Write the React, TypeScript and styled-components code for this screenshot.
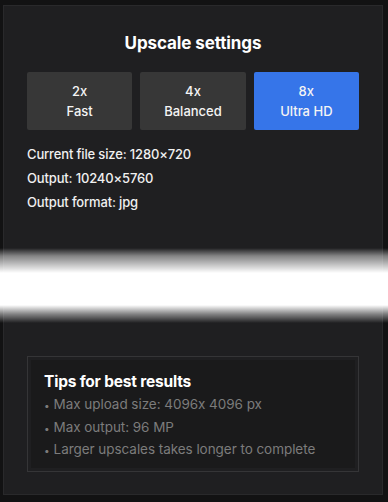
import React from "react";
import styled, { createGlobalStyle } from "styled-components";

const GlobalStyle = createGlobalStyle`
  html, body {
    margin: 0;
    padding: 0;
    background: #121213;
  }
  body {
    font-family: Inter, "Noto Sans", sans-serif;
    color: #f2f2f2;
  }
`;

const options = [
  { scale: "2x", label: "Fast", active: false },
  { scale: "4x", label: "Balanced", active: false },
  { scale: "8x", label: "Ultra HD", active: true },
];

const info = [
  "Current file size: 1280×720",
  "Output: 10240×5760",
  "Output format: jpg",
];

const tips = [
  "Max upload size: 4096x 4096 px",
  "Max output: 96 MP",
  "Larger upscales takes longer to complete",
];

const App: React.FC = () => {
  return (
    <Page>
      <GlobalStyle />
      <Panel>
        <Title>Upscale settings</Title>
        <Options>
          {options.map((item, index) => (
            <Option key={index} active={item.active}>
              <span>{item.scale}</span>
              <span>{item.label}</span>
            </Option>
          ))}
        </Options>
        <Info>
          {info.map((line, index) => (
            <p key={index}>{line}</p>
          ))}
        </Info>
        <Tips>
          <TipsInner>
            <h3>Tips for best results</h3>
            <ul>
              {tips.map((tip, index) => (
                <li key={index}>{tip}</li>
              ))}
            </ul>
          </TipsInner>
        </Tips>
        <Glare />
      </Panel>
    </Page>
  );
};

export default App;

const Page = styled.div`
  width: 388px;
  height: 502px;
  padding: 5px 5px 0 3px;
  box-sizing: border-box;
`;

const Panel = styled.div`
  position: relative;
  height: 490px;
  box-sizing: border-box;
  background: #1f1f21;
  border: 1px solid #29292b;
  padding: 26px 23px 0 23px;
  display: flex;
  flex-direction: column;
`;

const Title = styled.h2`
  margin: 0;
  text-align: center;
  font-size: 17px;
  line-height: 22px;
  font-weight: 700;
  color: #ffffff;
  letter-spacing: -0.1px;
`;

const Options = styled.div`
  margin-top: 18px;
  display: grid;
  grid-template-columns: repeat(3, 1fr);
  gap: 8px;
`;

const Option = styled.div<{ active: boolean }>`
  height: 58px;
  border-radius: 2px;
  background: ${({ active }) => (active ? "#3675e9" : "#373737")};
  display: flex;
  flex-direction: column;
  align-items: center;
  justify-content: center;
  gap: 4px;
  font-size: 13px;
  line-height: 16px;
  font-weight: 500;
  color: #f4f4f4;
`;

const Info = styled.div`
  margin-top: 12px;
  display: flex;
  flex-direction: column;

  p {
    margin: 0;
    font-size: 13px;
    line-height: 24px;
    font-weight: 500;
    color: #f0f0f0;
    letter-spacing: -0.15px;
  }
`;

const Tips = styled.div`
  margin-top: 142px;
  height: 116px;
  box-sizing: border-box;
  border: 1px solid #353537;
  padding: 3px;
`;

const TipsInner = styled.div`
  height: 100%;
  box-sizing: border-box;
  background: #1a1a1b;
  padding: 12px 13px;

  h3 {
    margin: 0 0 2px;
    font-size: 15.5px;
    line-height: 20px;
    font-weight: 700;
    color: #ffffff;
    letter-spacing: -0.2px;
  }

  ul {
    margin: 0;
    padding: 0;
    list-style: none;
  }

  li {
    font-size: 13.5px;
    line-height: 21.5px;
    color: #7c7c7c;
    letter-spacing: -0.05px;
  }

  li::before {
    content: "•";
    margin-right: 4px;
    font-size: 10px;
  }
`;

const Glare = styled.div`
  position: absolute;
  left: -4px;
  right: -6px;
  top: 242px;
  height: 75px;
  background: linear-gradient(
    to bottom,
    rgba(255, 255, 255, 0) 0px,
    rgba(255, 255, 255, 0.45) 8px,
    #ffffff 25px,
    #ffffff 57px,
    rgba(255, 255, 255, 0.45) 66px,
    rgba(255, 255, 255, 0) 75px
  );
`;
